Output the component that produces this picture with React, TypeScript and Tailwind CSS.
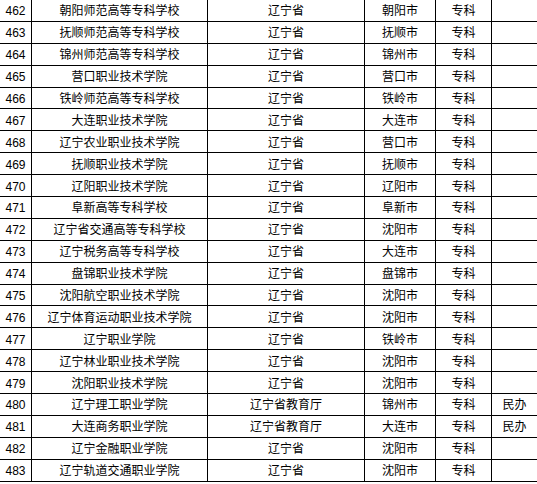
import React from "react"

type Row = [number, string, string, string, string, string?]

const rows: Row[] = [
  [462, "朝阳师范高等专科学校", "辽宁省", "朝阳市", "专科"],
  [463, "抚顺师范高等专科学校", "辽宁省", "抚顺市", "专科"],
  [464, "锦州师范高等专科学校", "辽宁省", "锦州市", "专科"],
  [465, "营口职业技术学院", "辽宁省", "营口市", "专科"],
  [466, "铁岭师范高等专科学校", "辽宁省", "铁岭市", "专科"],
  [467, "大连职业技术学院", "辽宁省", "大连市", "专科"],
  [468, "辽宁农业职业技术学院", "辽宁省", "营口市", "专科"],
  [469, "抚顺职业技术学院", "辽宁省", "抚顺市", "专科"],
  [470, "辽阳职业技术学院", "辽宁省", "辽阳市", "专科"],
  [471, "阜新高等专科学校", "辽宁省", "阜新市", "专科"],
  [472, "辽宁省交通高等专科学校", "辽宁省", "沈阳市", "专科"],
  [473, "辽宁税务高等专科学校", "辽宁省", "大连市", "专科"],
  [474, "盘锦职业技术学院", "辽宁省", "盘锦市", "专科"],
  [475, "沈阳航空职业技术学院", "辽宁省", "沈阳市", "专科"],
  [476, "辽宁体育运动职业技术学院", "辽宁省", "沈阳市", "专科"],
  [477, "辽宁职业学院", "辽宁省", "铁岭市", "专科"],
  [478, "辽宁林业职业技术学院", "辽宁省", "沈阳市", "专科"],
  [479, "沈阳职业技术学院", "辽宁省", "沈阳市", "专科"],
  [480, "辽宁理工职业学院", "辽宁省教育厅", "锦州市", "专科", "民办"],
  [481, "大连商务职业学院", "辽宁省教育厅", "大连市", "专科", "民办"],
  [482, "辽宁金融职业学院", "辽宁省", "沈阳市", "专科"],
  [483, "辽宁轨道交通职业学院", "辽宁省", "沈阳市", "专科"],
]

function Cell({ children }: { children?: React.ReactNode }) {
  return (
    <div className="h-[21.9px] border-r border-b border-black flex items-center justify-center pt-[2px] whitespace-nowrap overflow-hidden">
      {children}
    </div>
  )
}

export default function App() {
  return (
    <div
      className="w-[538px] h-[484px] overflow-hidden bg-white text-black text-[12px] leading-none"
      style={{ fontFamily: '"Liberation Sans", "Noto Sans CJK SC", sans-serif' }}
    >
      <div className="grid grid-cols-[32px_176px_157px_71px_56px_46px]">
        {rows.map((r) => (
          <React.Fragment key={r[0]}>
            <Cell>{r[0]}</Cell>
            <Cell>{r[1]}</Cell>
            <Cell>{r[2]}</Cell>
            <Cell>{r[3]}</Cell>
            <Cell>{r[4]}</Cell>
            <Cell>{r[5]}</Cell>
          </React.Fragment>
        ))}
      </div>
    </div>
  )
}
